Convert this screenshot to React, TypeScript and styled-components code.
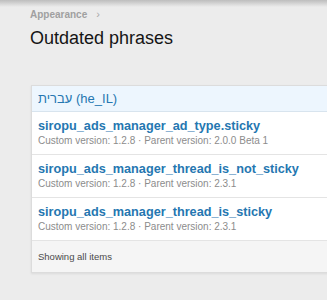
import React from "react";
import styled, { createGlobalStyle } from "styled-components";

const Global = createGlobalStyle`
  html, body { margin: 0; padding: 0; }
  body {
    background: #ececec;
    font-family: "Liberation Sans", Arial, sans-serif;
    overflow: hidden;
  }
`;

const Page = styled.div`
  position: relative;
  width: 327px;
  height: 300px;
  background: #ececec;
  overflow: hidden;
`;

const TopShade = styled.div`
  position: absolute;
  left: 0;
  right: 0;
  top: 0;
  height: 7px;
  background: linear-gradient(#bdbdbd, rgba(236, 236, 236, 0));
`;

const Content = styled.div`
  display: flex;
  flex-direction: column;
  padding: 7px 0 0 30px;
`;

const Breadcrumb = styled.div`
  display: flex;
  align-items: center;
  gap: 9px;
  font-size: 10px;
  font-weight: bold;
  color: #a0a0a0;
  height: 14px;
`;

const Chevron = styled.span`
  font-weight: normal;
  font-size: 11px;
  color: #a8a8a8;
`;

const Title = styled.h1`
  margin: 6px 0 0;
  font-size: 18px;
  font-weight: normal;
  color: #151515;
  line-height: 22px;
`;

const Panel = styled.div`
  margin: 36px 0 0 1px;
  width: 320px;
  background: #fff;
  border: 1px solid #dcdcdc;
  border-right: none;
  box-shadow: 0 1px 2px rgba(0, 0, 0, 0.08);
`;

const Header = styled.div`
  height: 25px;
  display: flex;
  align-items: center;
  padding: 0 6px;
  background: #edf6fe;
  border-bottom: 1px solid #d8e4ee;
  color: #2577b1;
  font-size: 13px;
`;

const Row = styled.div`
  height: 42px;
  display: flex;
  flex-direction: column;
  justify-content: center;
  padding: 0 6px;
  border-bottom: 1px solid #e4e4e4;
`;

const RowTitle = styled.div`
  font-size: 12.7px;
  font-weight: bold;
  color: #2577b1;
  line-height: 16px;
`;

const RowMeta = styled.div`
  font-size: 10px;
  color: #8c8c8c;
  line-height: 14px;
`;

const Footer = styled.div`
  height: 31px;
  display: flex;
  align-items: center;
  padding: 0 6px;
  background: #f5f5f5;
  font-size: 9.5px;
  color: #4a4a4a;
`;

const rows = [
  { name: "siropu_ads_manager_ad_type.sticky", parent: "2.0.0 Beta 1" },
  { name: "siropu_ads_manager_thread_is_not_sticky", parent: "2.3.1" },
  { name: "siropu_ads_manager_thread_is_sticky", parent: "2.3.1" },
];

export default function App() {
  return (
    <Page>
      <Global />
      <TopShade />
      <Content>
        <Breadcrumb>
          <span>Appearance</span>
          <Chevron>›</Chevron>
        </Breadcrumb>
        <Title>Outdated phrases</Title>
        <Panel>
          <Header>
            <span dir="ltr">
              <bdi>עברית</bdi> (he_IL)
            </span>
          </Header>
          {rows.map((r) => (
            <Row key={r.name}>
              <RowTitle>{r.name}</RowTitle>
              <RowMeta>
                Custom version: 1.2.8 · Parent version: {r.parent}
              </RowMeta>
            </Row>
          ))}
          <Footer>Showing all items</Footer>
        </Panel>
      </Content>
    </Page>
  );
}
